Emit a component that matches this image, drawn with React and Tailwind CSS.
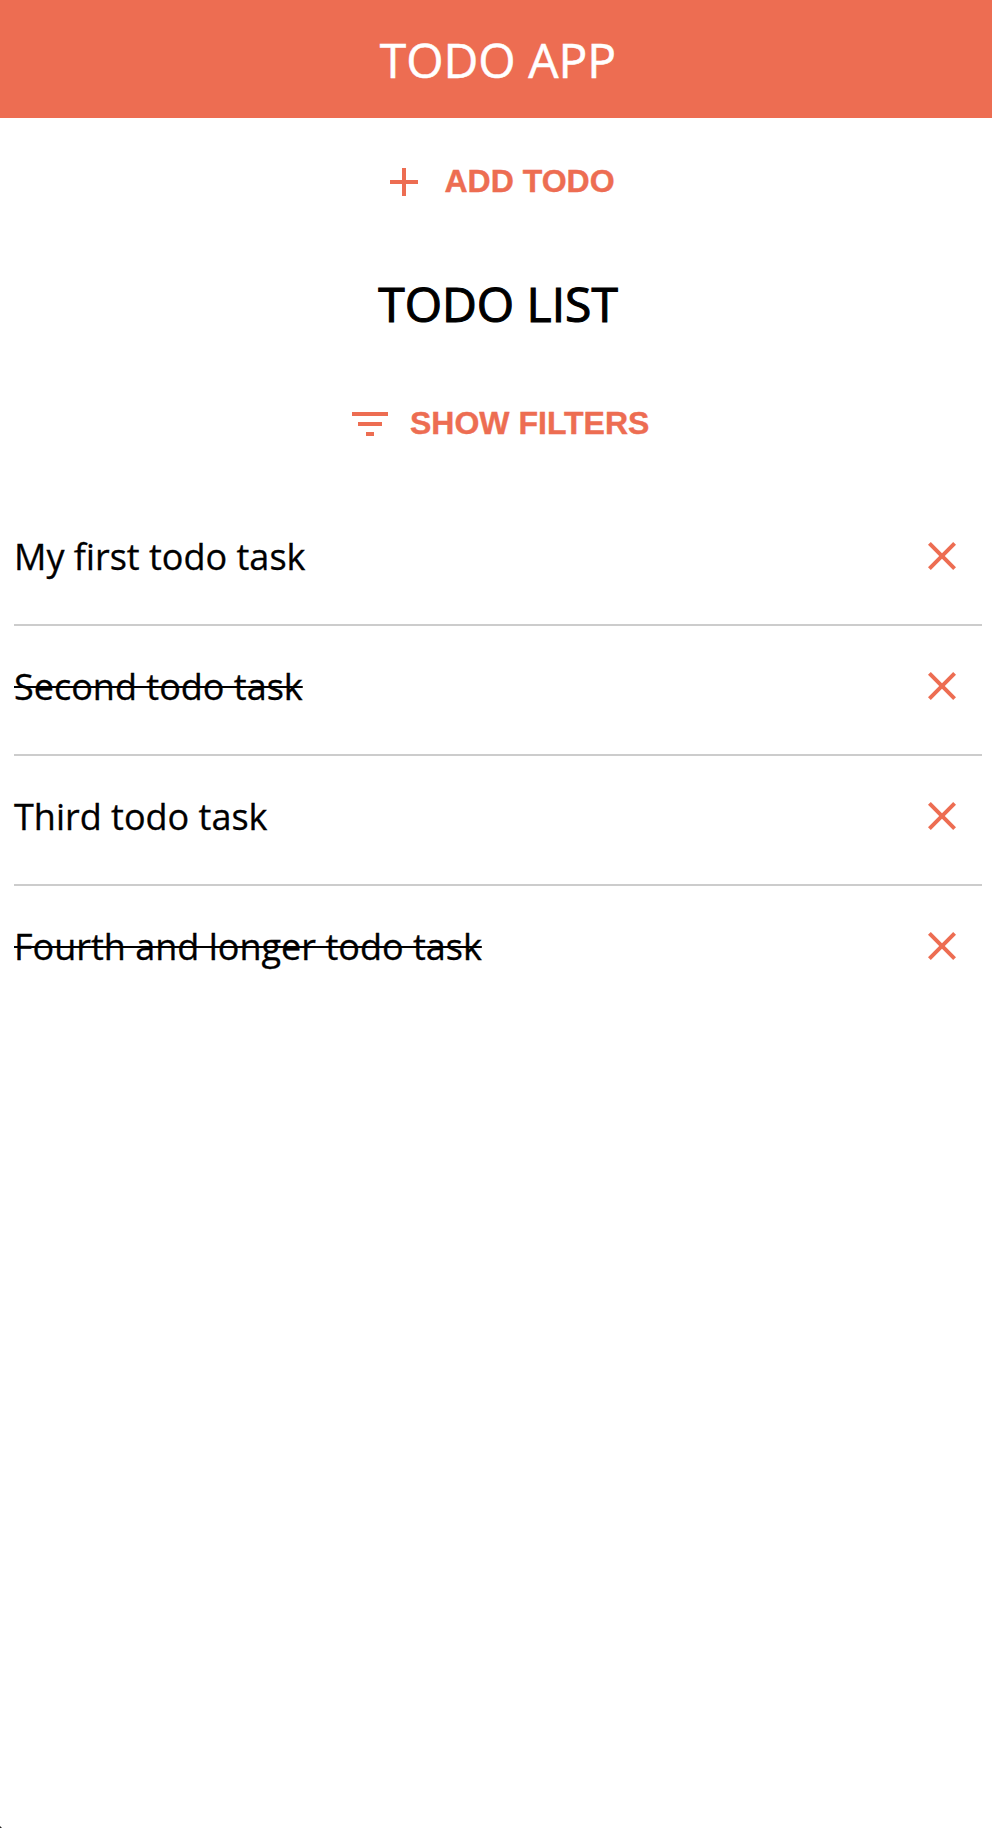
import { MdAdd, MdFilterList, MdClose } from "react-icons/md";

const tasks = [
  { text: "My first todo task", done: false },
  { text: "Second todo task", done: true },
  { text: "Third todo task", done: false },
  { text: "Fourth and longer todo task", done: true },
];

export default function App() {
  return (
    <div className="flex min-h-[1828px] flex-col bg-white font-['Open_Sans',sans-serif] text-black">
      <header className="flex h-[118px] items-center justify-center bg-[#ed6d52] pt-[2px] pr-[10px] pl-[14px] text-white">
        <h1 className="text-[48px] leading-[66px] [-webkit-text-stroke:0.5px_white]">TODO APP</h1>
      </header>
      <main className="flex flex-col items-center pr-[10px] pl-[14px]">
        <button className="mt-[38px] flex h-[50px] w-[236px] items-center gap-[16.5px] font-['Liberation_Sans',sans-serif] text-[32px] font-bold whitespace-nowrap text-[#ed6d52] [-webkit-text-stroke:0.4px_#ed6d52]">
          <MdAdd className="mt-[2px] size-12 shrink-0" />
          ADD TODO
        </button>
        <h2 className="mt-[65px] text-[48px] leading-[66px] [-webkit-text-stroke:1.1px_black]">TODO LIST</h2>
        <button className="mt-[61px] flex h-[50px] w-[304px] items-center gap-[16px] font-['Liberation_Sans',sans-serif] text-[32px] font-bold whitespace-nowrap text-[#ed6d52] [-webkit-text-stroke:0.4px_#ed6d52]">
          <MdFilterList className="mt-[2px] size-12 shrink-0" />
          SHOW FILTERS
        </button>
        <ul className="mt-[48px] w-full">
          {tasks.map((t) => (
            <li
              key={t.text}
              className="flex h-[130px] items-center justify-between border-b-2 border-[#cccccc] pr-4 pb-2 text-[36px] [-webkit-text-stroke:0.3px_black] last:border-transparent"
            >
              <span className={t.done ? "pt-[2px] line-through decoration-2" : "pt-[2px]"}>{t.text}</span>
              <button className="text-[#ed6d52]">
                <MdClose className="size-12" />
              </button>
            </li>
          ))}
        </ul>
      </main>
      <svg viewBox="0 0 2 2" className="mt-auto size-[2px]">
        <path d="M0 0L2 2H0Z" fill="#222222" />
      </svg>
    </div>
  );
}
